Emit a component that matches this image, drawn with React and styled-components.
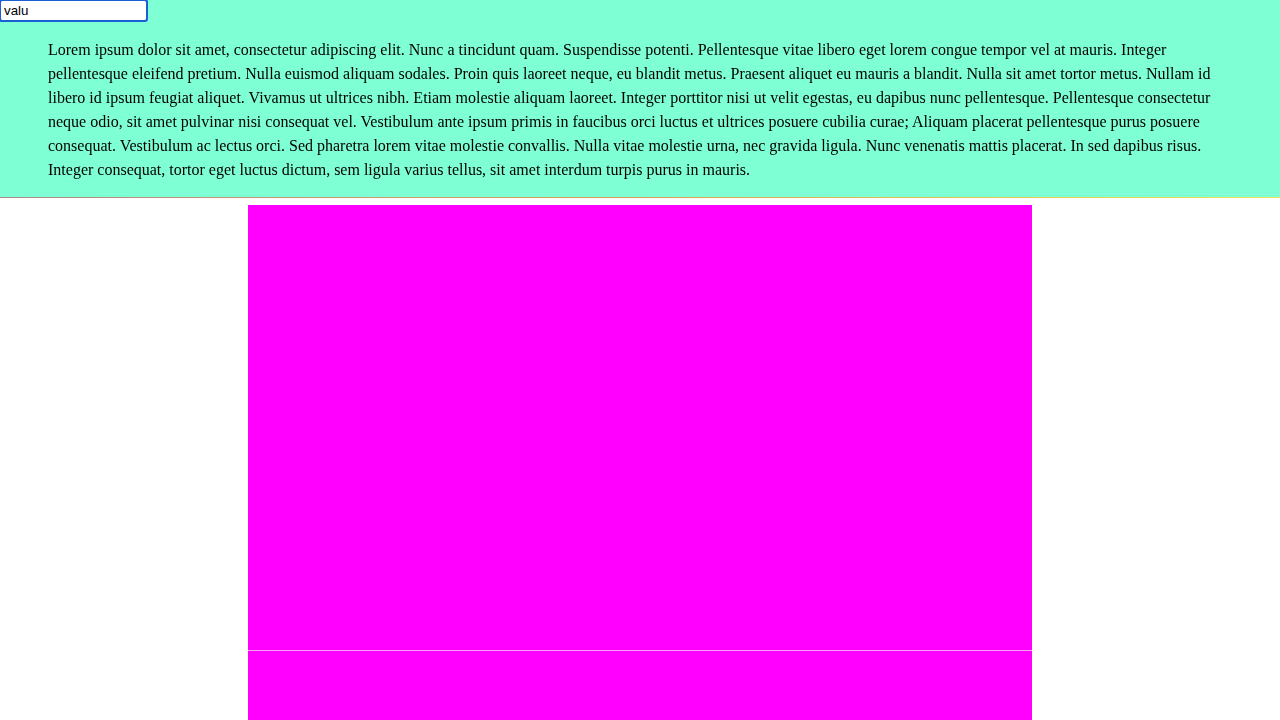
import React from 'react'
import styled, {createGlobalStyle} from 'styled-components'

const Global = createGlobalStyle`
  html, body {
    margin: 0;
    padding: 0;
    background: #fff;
  }
`

const Header = styled.section`
  background: #7fffd4;
  display: flow-root;
  border-bottom: 1px solid transparent;
  border-image: linear-gradient(to right, #b08c8c, #d6a450 50%, #ece45a) 1;
`

const Field = styled.input`
  display: block;
  box-sizing: border-box;
  width: 147px;
  height: 21px;
  margin: 0;
  padding: 1px 3px;
  border: 1px solid #767676;
  border-radius: 2px;
  font-family: "Liberation Sans", Arial, sans-serif;
  font-size: 13.3333px;
  color: #000;
  background: #fff;

  &:focus {
    outline: 2px solid #1a5fd6;
    outline-offset: -1px;
    border-color: #1a5fd6;
  }
`

const Text = styled.p`
  margin: 17px 48px 15px;
  font-family: "Liberation Serif", "Times New Roman", serif;
  font-size: 16px;
  line-height: 24px;
  color: #000;
`

const Stage = styled.div`
  width: 784px;
  margin: 7px auto 0;
`

const Panel = styled.div`
  background: #ff00ff;
  height: ${p => p.h}px;
  border-top: ${p => (p.seam ? '1px solid #ff9cff' : 'none')};
`

const lorem = 'Lorem ipsum dolor sit amet, consectetur adipiscing elit. Nunc a tincidunt quam. Suspendisse potenti. Pellentesque vitae libero eget lorem congue tempor vel at mauris. Integer pellentesque eleifend pretium. Nulla euismod aliquam sodales. Proin quis laoreet neque, eu blandit metus. Praesent aliquet eu mauris a blandit. Nulla sit amet tortor metus. Nullam id libero id ipsum feugiat aliquet. Vivamus ut ultrices nibh. Etiam molestie aliquam laoreet. Integer porttitor nisi ut velit egestas, eu dapibus nunc pellentesque. Pellentesque consectetur neque odio, sit amet pulvinar nisi consequat vel. Vestibulum ante ipsum primis in faucibus orci luctus et ultrices posuere cubilia curae; Aliquam placerat pellentesque purus posuere consequat. Vestibulum ac lectus orci. Sed pharetra lorem vitae molestie convallis. Nulla vitae molestie urna, nec gravida ligula. Nunc venenatis mattis placerat. In sed dapibus risus. Integer consequat, tortor eget luctus dictum, sem ligula varius tellus, sit amet interdum turpis purus in mauris.'

const App = () => (
  <>
    <Global />
    <Header>
      <Field defaultValue="valu" autoFocus />
      <Text>{lorem}</Text>
    </Header>
    <Stage>
      <Panel h={445} />
      <Panel h={300} seam />
    </Stage>
  </>
)

export default App
